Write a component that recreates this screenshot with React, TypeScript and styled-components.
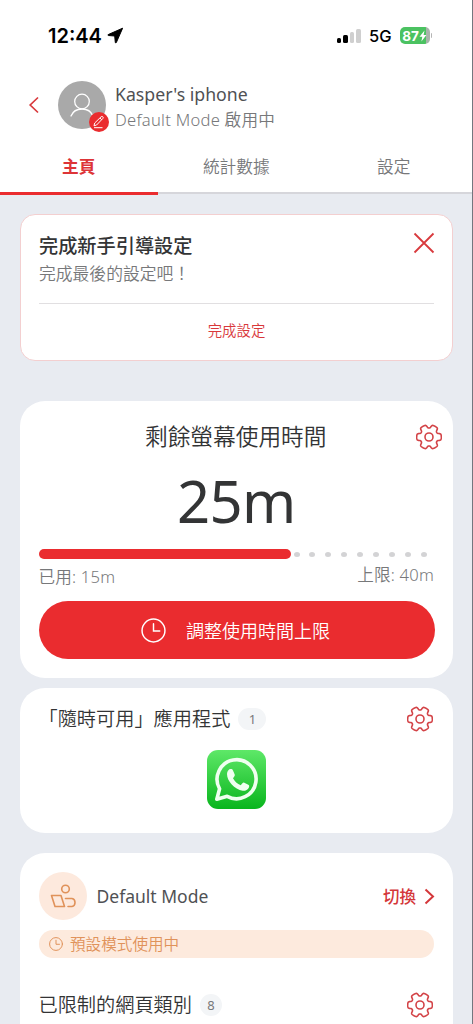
import React from "react";
import styled, { createGlobalStyle } from "styled-components";

const RED = "#ea2c2f";
const INK = "#333435";
const MUTED = "#77787a";
const ORANGE = "#e0925a";

const Global = createGlobalStyle`
  * { box-sizing: border-box; }
  body { margin: 0; background: #e8ebf1; }
  svg { display: block; flex: none; }
  button { font: inherit; border: 0; background: none; padding: 0; }
`;

const Screen = styled.div`
  width: 473px;
  height: 1024px;
  overflow: hidden;
  background: #e8ebf1;
  border-right: 1px solid #73777f;
  font-family: "Noto Sans", "Noto Sans CJK TC", sans-serif;
  font-weight: 350;
  color: ${INK};
`;

const Header = styled.header`
  height: 194px;
  background: #fff;
`;

const StatusBar = styled.div`
  display: flex;
  align-items: center;
  height: 71px;
  padding: 0 40px 0 48px;
  font-family: Inter, sans-serif;
  color: #000;
`;

const Clock = styled.span`
  font-size: 20px;
  font-weight: 600;
  margin-right: 5px;
`;

const Signal = styled.div`
  display: flex;
  align-items: flex-end;
  gap: 2px;
  height: 15px;
  margin: 0 8px 0 auto;
`;

const SignalBar = styled.i<{ $h: number; $on?: boolean }>`
  width: 4.5px;
  height: ${(p) => p.$h}px;
  border-radius: 1.5px;
  background: ${(p) => (p.$on ? "#000" : "#cfcfcf")};
`;

const Network = styled.span`
  font-size: 16.5px;
  font-weight: 500;
  margin-right: 8px;
`;

const Battery = styled.div`
  display: flex;
  align-items: center;
  justify-content: center;
  width: 30px;
  height: 17px;
  border-radius: 5px;
  background: linear-gradient(90deg, #4bc261 87%, #a9b3ab 87%);
  color: #fff;
  font-size: 13.5px;
  font-weight: 700;
`;

const BatteryTip = styled.i`
  width: 1.5px;
  height: 5px;
  margin-left: 1px;
  border-radius: 0 2px 2px 0;
  background: #b5b5b5;
`;

const Profile = styled.div`
  display: flex;
  align-items: center;
  height: 67px;
  padding-left: 28px;
`;

const Avatar = styled.div`
  position: relative;
  width: 48px;
  height: 48px;
  margin: 0 9px 0 18px;
  border-radius: 50%;
  background: #a9a9a9;
`;

const EditBadge = styled.div`
  position: absolute;
  right: -3px;
  bottom: -3px;
  display: grid;
  place-items: center;
  width: 20px;
  height: 20px;
  border-radius: 50%;
  background: ${RED};
`;

const Names = styled.div`
  display: flex;
  flex-direction: column;
  padding-top: 3px;
`;

const DeviceName = styled.div`
  font-size: 17.7px;
  font-weight: 400;
  line-height: 26px;
  color: #505154;
`;

const DeviceMode = styled.div`
  font-size: 16.6px;
  line-height: 25px;
  letter-spacing: 0.25px;
  color: ${MUTED};
`;

const Tabs = styled.nav`
  display: grid;
  grid-template-columns: repeat(3, 157.5px);
  height: 56px;
`;

const Tab = styled.a<{ $active?: boolean }>`
  display: flex;
  align-items: flex-start;
  justify-content: center;
  height: ${(p) => (p.$active ? 57 : 56)}px;
  padding-top: 16px;
  border-bottom: ${(p) => (p.$active ? `3px solid ${RED}` : "2px solid #d6d6db")};
  color: ${(p) => (p.$active ? "#dd3437" : MUTED)};
  font-size: 16.7px;
  line-height: 26px;
  font-weight: ${(p) => (p.$active ? 700 : 350)};
`;

const Content = styled.main`
  display: flex;
  flex-direction: column;
  padding: 20px 19px 0 20px;
`;

const Card = styled.section<{ $h: number; $gap: number }>`
  height: ${(p) => p.$h}px;
  margin-bottom: ${(p) => p.$gap}px;
  padding: 0 19px 0 18.5px;
  border-radius: 25px;
  background: #fff;
  flex: none;
`;

const GuideCard = styled(Card)`
  padding: 0 18px;
  border: 1px solid #f3cfd0;
  border-radius: 15px;
`;

const Row = styled.div<{ $h: number; $top?: number }>`
  display: flex;
  align-items: center;
  height: ${(p) => p.$h}px;
  margin-top: ${(p) => p.$top ?? 0}px;
`;

const GuideTop = styled.div`
  display: flex;
  justify-content: space-between;
  height: 89px;
  padding-top: 17px;
  border-bottom: 1px solid #e1dfe1;
`;

const GuideTitle = styled.div`
  font-size: 19.2px;
  font-weight: 500;
  line-height: 28px;
`;

const GuideText = styled.div`
  font-size: 16.8px;
  line-height: 28px;
  color: ${MUTED};
`;

const GuideAction = styled.button`
  display: block;
  width: 100%;
  height: 51px;
  color: #d9383b;
  font-size: 14.4px;
`;

const CloseIcon = styled.svg`
  margin-right: -1px;
`;

const TimeHead = styled.div`
  display: grid;
  grid-template-columns: 26px 1fr 26px;
  align-items: center;
  height: 72px;
  margin-right: -8px;
  text-align: center;
`;

const TimeTitle = styled.h2`
  margin: 0 9px 0 0;
  font-size: 22.7px;
  font-weight: 350;
  line-height: 32px;
`;

const TimeLeft = styled.div`
  height: 76px;
  margin-top: -8px;
  text-align: center;
  font-size: 58px;
  font-weight: 400;
  line-height: 72px;
  letter-spacing: -0.7px;
`;

const Progress = styled.div`
  display: flex;
  align-items: center;
  height: 10px;
  margin-top: 8px;
`;

const Used = styled.div`
  width: 252.5px;
  height: 10px;
  border-radius: 5px;
  background: ${RED};
`;

const Dots = styled.div`
  display: flex;
  justify-content: space-between;
  width: 133px;
  margin-left: 2.5px;
`;

const Dot = styled.i`
  width: 6px;
  height: 5px;
  border-radius: 50%;
  background: #d3d3d5;
`;

const Limits = styled.div`
  display: flex;
  justify-content: space-between;
  height: 42px;
  color: ${MUTED};
  font-size: 16.6px;
  letter-spacing: 0.2px;
  line-height: 31px;
`;

const LimitValue = styled.span<{ $down?: boolean }>`
  padding-top: ${(p) => (p.$down ? 2 : 0)}px;
`;

const AdjustButton = styled.button`
  display: flex;
  align-items: center;
  justify-content: center;
  gap: 20px;
  width: 396px;
  height: 58px;
  padding-right: 2px;
  border-radius: 29px;
  background: ${RED};
  color: #fff;
  font-size: 18px;
`;

const Heading = styled.h3`
  margin: -2px 0 0;
  font-size: 19.2px;
  font-weight: 350;
`;

const Count = styled.span<{ $w: number }>`
  display: grid;
  place-items: center;
  width: ${(p) => p.$w}px;
  height: 22px;
  margin-left: 8px;
  border-radius: 11px;
  background: #f3f5f7;
  color: ${MUTED};
  font-size: 13px;
  font-weight: 400;
`;

const Push = styled.div`
  margin: 0 1px 0 auto;
`;

const AppTile = styled.div`
  width: 59px;
  height: 59px;
  margin: 0 auto;
  border-radius: 11px;
  background: linear-gradient(#5ee868, #09b51d);
`;

const ModeIcon = styled.div`
  display: grid;
  place-items: center;
  width: 48px;
  height: 48px;
  margin-right: 10px;
  border-radius: 50%;
  background: #fde9dd;
`;

const ModeName = styled.span`
  font-size: 17.5px;
  font-weight: 400;
  color: #505154;
`;

const Switch = styled.button`
  display: flex;
  align-items: center;
  gap: 8px;
  margin: 0 -1px 0 auto;
  color: #d4373a;
  font-size: 16.5px;
  font-weight: 500;
`;

const ModeBanner = styled.div`
  display: flex;
  align-items: center;
  gap: 7px;
  height: 28px;
  margin-top: 10px;
  padding: 0 0 1px 10.5px;
  border-radius: 14px;
  background: #fdeadd;
  color: ${ORANGE};
  font-size: 15.6px;
`;

/* Outline of a cog with six soft teeth, the first one pointing right. */
const gearOutline = (() => {
  const points: string[] = [];
  for (let i = 0; i < 240; i++) {
    const a = (i / 240) * Math.PI * 2;
    const r = 10.55 + 1.75 * Math.tanh(2.4 * (Math.cos(6 * a) + 0.4));
    points.push(`${(13 + r * Math.cos(a)).toFixed(2)} ${(13 + r * Math.sin(a)).toFixed(2)}`);
  }
  return `M${points.join("L")}Z`;
})();

const Gear = () => (
  <svg width="26" height="26" viewBox="0 0 26 26" fill="none" stroke="#d34347" strokeWidth="1.6" strokeLinejoin="round">
    <path d={gearOutline} />
    <circle cx="13" cy="13" r="4" />
  </svg>
);

const ClockIcon = ({ size, width }: { size: number; width: number }) => (
  <svg width={size} height={size} viewBox="0 0 24 24" fill="none" stroke="currentColor" strokeWidth={width} strokeLinecap="round">
    <circle cx="12" cy="12" r="11" />
    <path d="M12 5.5V12.5H18" />
  </svg>
);

export default function App() {
  return (
    <Screen>
      <Global />
      <Header>
        <StatusBar>
          <Clock>12:44</Clock>
          <svg width="17" height="17" viewBox="0 0 17 17">
            <path d="M15.6 1.2 1.2 7.6q-.8.6.2.9l6.3.5.6 6.4q.4 1 1 .2z" stroke="#000" strokeLinejoin="round" />
          </svg>
          <Signal>
            <SignalBar $h={5} $on />
            <SignalBar $h={8} $on />
            <SignalBar $h={11} />
            <SignalBar $h={14} />
          </Signal>
          <Network>5G</Network>
          <Battery>
            87
            <svg width="8" height="12" viewBox="0 0 8 12">
              <path d="M5.5.5.5 6.7h2.8L2.4 11.5l5-6.5H4.6z" fill="#fff" />
            </svg>
          </Battery>
          <BatteryTip />
        </StatusBar>
        <Profile>
          <svg width="12" height="18" viewBox="0 0 12 18" fill="none" stroke="#d83a3d" strokeWidth="1.7">
            <path d="M10 1.5 2.2 9l7.8 7.5" />
          </svg>
          <Avatar>
            <svg width="48" height="48" viewBox="0 0 48 48" fill="none" stroke="#fff" strokeWidth="1.3" strokeLinecap="round">
              <circle cx="24" cy="20.5" r="7.3" />
              <path d="M13 35c1.8-4.5 6-7 11-7s9.2 2.5 11 7" />
            </svg>
            <EditBadge>
              <svg width="14" height="14" viewBox="0 0 14 14" fill="none" stroke="#fff" strokeLinejoin="round">
                <path d="M2 10.8 2.7 8 9.2 1.7q.8-.6 1.6.1t.1 1.6L4.6 10zM8 3l1.8 1.9M2 12.7h8.5" />
              </svg>
            </EditBadge>
          </Avatar>
          <Names>
            <DeviceName>Kasper's iphone</DeviceName>
            <DeviceMode>Default Mode 啟用中</DeviceMode>
          </Names>
        </Profile>
        <Tabs>
          <Tab $active>主頁</Tab>
          <Tab>統計數據</Tab>
          <Tab>設定</Tab>
        </Tabs>
      </Header>
      <Content>
        <GuideCard $h={147} $gap={40}>
          <GuideTop>
            <div>
              <GuideTitle>完成新手引導設定</GuideTitle>
              <GuideText>完成最後的設定吧！</GuideText>
            </div>
            <CloseIcon width="22" height="22" viewBox="0 0 22 22" stroke="#d83a3d" strokeWidth="1.8">
              <path d="M1.5 1.5l19 19M20.5 1.5l-19 19" />
            </CloseIcon>
          </GuideTop>
          <GuideAction>完成設定</GuideAction>
        </GuideCard>
        <Card $h={277} $gap={10}>
          <TimeHead>
            <span />
            <TimeTitle>剩餘螢幕使用時間</TimeTitle>
            <Gear />
          </TimeHead>
          <TimeLeft>25m</TimeLeft>
          <Progress>
            <Used />
            <Dots>
              {Array.from({ length: 9 }, (_, i) => (
                <Dot key={i} />
              ))}
            </Dots>
          </Progress>
          <Limits>
            <LimitValue $down>已用: 15m</LimitValue>
            <LimitValue>上限: 40m</LimitValue>
          </Limits>
          <AdjustButton>
            <ClockIcon size={25} width={1.4} />
            調整使用時間上限
          </AdjustButton>
        </Card>
        <Card $h={145} $gap={20}>
          <Row $h={62}>
            <Heading>「隨時可用」應用程式</Heading>
            <Count $w={28}>1</Count>
            <Push>
              <Gear />
            </Push>
          </Row>
          <AppTile>
            <svg width="59" height="59" viewBox="0 0 59 59" fill="none">
              <path
                d="M9.8 49.2 12.6 38.8A19.5 19.5 0 1 1 20.2 46.3Z"
                stroke="#effff0"
                strokeWidth="3.6"
                strokeLinejoin="round"
              />
              <path
                d="M20 24c0-3 2-5 3.5-5 1.700 0 2 .3 2.700 2l1.500 3.500c.4 1-.2 1.900-1.700 3.700 1.800 3.200 4.200 5.500 7.800 7 1.800-2.200 2.300-3 3.500-2.400l4 2c1.200.7 1 1.500.6 2.600-1 2.500-4 3.600-6.200 3.300C27.500 39.400 20 31 20 24Z"
                fill="#effff0"
              />
            </svg>
          </AppTile>
        </Card>
        <Card $h={240} $gap={0}>
          <Row $h={48} $top={19}>
            <ModeIcon>
              <svg width="26" height="24" viewBox="0 0 26 24" fill="none" stroke={ORANGE} strokeWidth="1.6" strokeLinejoin="round" strokeLinecap="round">
                <circle cx="15.5" cy="5" r="3.8" />
                <path d="M1.5 11.5h9.5l3.5 11H5zM15.5 14.5h6.5q3 .5 3 4t-3 4h-4" />
              </svg>
            </ModeIcon>
            <ModeName>Default Mode</ModeName>
            <Switch>
              切換
              <svg width="11" height="17" viewBox="0 0 11 17" fill="none" stroke="currentColor" strokeWidth="2">
                <path d="M1.5 1.5 9 8.5l-7.5 7" />
              </svg>
            </Switch>
          </Row>
          <ModeBanner>
            <ClockIcon size={14} width={1.7} />
            預設模式使用中
          </ModeBanner>
          <Row $h={50} $top={22}>
            <Heading>已限制的網頁類別</Heading>
            <Count $w={22}>8</Count>
            <Push>
              <Gear />
            </Push>
          </Row>
        </Card>
      </Content>
    </Screen>
  );
}
